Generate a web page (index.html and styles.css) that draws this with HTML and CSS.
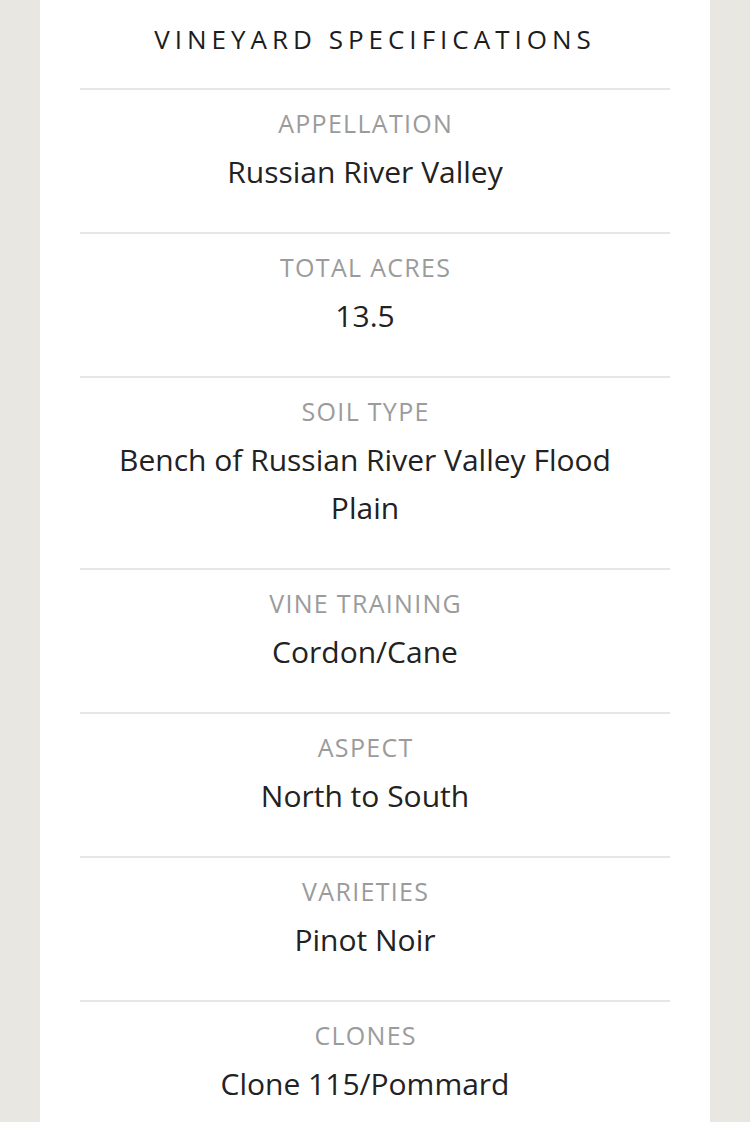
FILE: index.html
```html
<!DOCTYPE html>
<html>
<head>
<meta charset="utf-8">
<link rel="stylesheet" href="styles.css">
</head>
<body>
<div class="card">
  <h2 class="title">VINEYARD SPECIFICATIONS</h2>
  <div class="spec"><div class="label">APPELLATION</div><div class="value">Russian River Valley</div></div>
  <div class="spec"><div class="label">TOTAL ACRES</div><div class="value">13.5</div></div>
  <div class="spec"><div class="label">SOIL TYPE</div><div class="value">Bench of Russian River Valley Flood Plain</div></div>
  <div class="spec"><div class="label">VINE TRAINING</div><div class="value">Cordon/Cane</div></div>
  <div class="spec"><div class="label">ASPECT</div><div class="value">North to South</div></div>
  <div class="spec"><div class="label">VARIETIES</div><div class="value">Pinot Noir</div></div>
  <div class="spec"><div class="label">CLONES</div><div class="value">Clone 115/Pommard</div></div>
</div>
</body>
</html>
```
FILE: styles.css
```css
html, body {
  margin: 0;
  padding: 0;
  background: #e8e7e2;
  height: 100%;
  overflow: hidden;
}
body {
  font-family: "Open Sans", "Lato", sans-serif;
}
.card {
  margin-left: 40px;
  width: 670px;
  box-sizing: border-box;
  padding: 0 40px;
  background: #ffffff;
  min-height: 1122px;
}
.title {
  margin: 0;
  height: 88px;
  box-sizing: border-box;
  padding-top: 21px;
  font-size: 26px;
  line-height: 36px;
  font-weight: 400;
  letter-spacing: 5px;
  color: #1c1c1c;
  text-align: center;
}
.spec {
  border-top: 2px solid #e6e6e6;
  padding: 15px 40px 36px 20px;
  text-align: center;
}
.label {
  font-size: 25px;
  line-height: 36px;
  letter-spacing: 1.3px;
  padding-left: 1.3px;
  color: #9b9b9b;
  margin-bottom: 7px;
}
.value {
  font-size: 30px;
  line-height: 48px;
  color: #222222;
}
```
